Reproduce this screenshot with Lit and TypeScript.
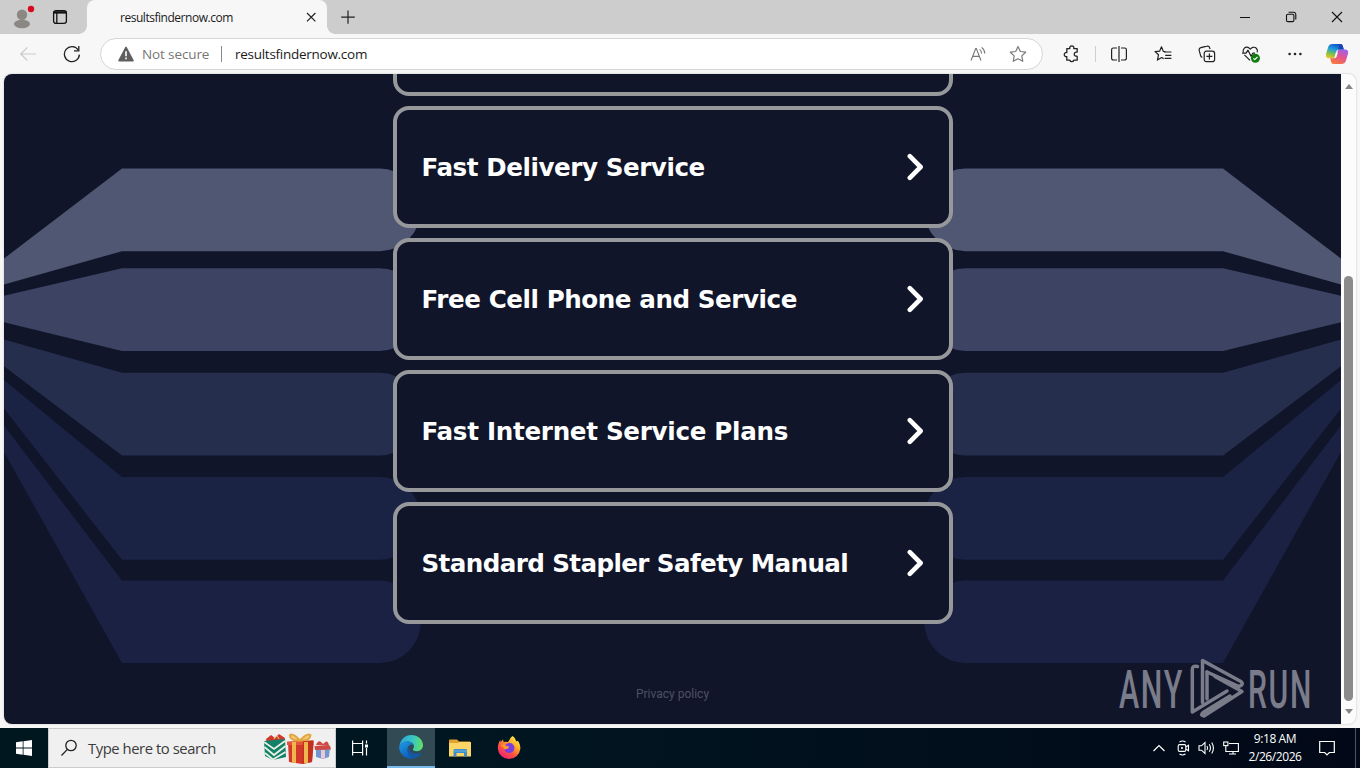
import { LitElement, html, css, svg } from 'lit';
import { customElement, property } from 'lit/decorators.js';
import { styleMap } from 'lit/directives/style-map.js';

const CARDS = [
  { label: 'Fast Delivery Service', tracking: -0.44 },
  { label: 'Free Cell Phone and Service', tracking: -0.43 },
  { label: 'Fast Internet Service Plans', tracking: -0.3 },
  { label: 'Standard Stapler Safety Manual', tracking: -0.6 },
];

// One ribbon per row: y at the page edge (top, bottom) and y of the straight part (top, bottom)
const RIBBONS = [
  { edge: [184.5, 210.5], flat: [94.6, 177.2], fill: '#4f5773' },
  { edge: [221.7, 248.3], flat: [194.2, 276.9], fill: '#3c4363' },
  { edge: [265.4, 292.3], flat: [298.8, 381.4], fill: '#262e4e' },
  { edge: [306, 334.6], flat: [403.1, 485.8], fill: '#1b2345' },
  { edge: [351.5, 378], flat: [506.5, 589.1], fill: '#1a2142' },
];

@customElement('page-ribbons')
export class PageRibbons extends LitElement {
  static styles = css`
    :host {
      display: block;
    }
    svg {
      display: block;
    }
  `;

  ribbon(r: (typeof RIBBONS)[number]) {
    const [e0, e1] = r.edge;
    const [f0, f1] = r.flat;
    const rad = (f1 - f0) / 2;
    return svg`<path fill=${r.fill}
      d="M0 ${e0}L118 ${f0}H375.5A${rad} ${rad} 0 0 1 375.5 ${f1}H118L0 ${e1}Z"/>`;
  }

  render() {
    return html`
      <svg width="1337" height="650" viewBox="0 0 1337 650">
        <g>${RIBBONS.map((r) => this.ribbon(r))}</g>
        <g transform="translate(1337 0) scale(-1 1)">${RIBBONS.map((r) => this.ribbon(r))}</g>
      </svg>
    `;
  }
}

@customElement('link-card')
export class LinkCard extends LitElement {
  @property() label = '';
  @property({ type: Number }) tracking = 0;

  static styles = css`
    :host {
      box-sizing: border-box;
      display: flex;
      align-items: center;
      justify-content: space-between;
      width: 560px;
      height: 122px;
      flex: none;
      padding: 0 24px;
      border: 4px solid #96989b;
      border-radius: 16px;
      background: #10152a;
      color: #fff;
      font: bold 24.6px/30px 'DejaVu Sans', Verdana, sans-serif;
      white-space: nowrap;
    }
    span {
      padding: 2px 0 0 1px;
    }
    svg {
      display: block;
      flex: none;
    }
  `;

  render() {
    return html`
      <span style=${styleMap({ letterSpacing: `${this.tracking}px` })}>${this.label}</span>
      <svg width="20" height="28" viewBox="0 0 20 28" fill="none" stroke="#fff" stroke-width="4.6" stroke-linecap="round" stroke-linejoin="round">
        <path d="M4.8 3.2L15.6 14L4.8 24.8" />
      </svg>
    `;
  }
}

@customElement('title-bar')
export class TitleBar extends LitElement {
  static styles = css`
    :host {
      display: flex;
      height: 34px;
      background: #cdcdcd;
      color: #1b1b1b;
    }
    svg {
      display: block;
    }
    .cell {
      display: flex;
      align-items: center;
      justify-content: center;
      height: 34px;
    }
    .profile { width: 44px; }
    .workspace { width: 32px; }
    .tab {
      display: flex;
      align-items: center;
      box-sizing: border-box;
      width: 240px;
      padding: 0 9px 0 33px;
      justify-content: space-between;
      background: #f7f7f7;
      border-radius: 8px 8px 0 0;
      font-size: 12px;
      letter-spacing: -0.47px;
    }
    .foot {
      width: 8px;
      height: 8px;
      align-self: flex-end;
    }
    .foot.left {
      margin-left: 3px;
      background: radial-gradient(circle at 0 0, #cdcdcd 7.5px, #f7f7f7 8px);
    }
    .foot.right {
      background: radial-gradient(circle at 100% 0, #cdcdcd 7.5px, #f7f7f7 8px);
    }
    .plus { width: 26px; }
    .window {
      display: flex;
      margin-left: auto;
    }
    .window .cell { width: 46px; }
  `;

  render() {
    return html`
      <div class="cell profile">
        <svg width="26" height="26" viewBox="0 0 26 26">
          <circle cx="13" cy="10.7" r="5.2" fill="#8b8783" />
          <ellipse cx="13" cy="20" rx="8" ry="4.2" fill="#8b8783" />
          <circle cx="22" cy="5" r="5" fill="#cdcdcd" />
          <circle cx="22" cy="5" r="3.2" fill="#d60a1e" />
        </svg>
      </div>
      <div class="cell workspace">
        <svg width="16" height="16" viewBox="0 0 16 16" fill="none" stroke="#111" stroke-width="1.3">
          <rect x="1.6" y="1.6" width="12.8" height="12.8" rx="2.4" />
          <path d="M1.6 3.4h12.8" stroke-width="2.4" />
          <path d="M4.8 4v10" />
        </svg>
      </div>
      <div class="foot left"></div>
      <div class="tab">
        <span>resultsfindernow.com</span>
        <svg width="14" height="14" viewBox="0 0 14 14" stroke="#222" stroke-width="1.2"><path d="M3 3l8.4 8.4M11.4 3L3 11.4" /></svg>
      </div>
      <div class="foot right"></div>
      <div class="cell plus">
        <svg width="16" height="16" viewBox="0 0 16 16" stroke="#222" stroke-width="1.2"><path d="M8 1.4v13.4M1.2 8.1h13.6" /></svg>
      </div>
      <div class="window">
        <div class="cell"><svg width="12" height="12" viewBox="0 0 12 12"><path d="M1 6.5h10" stroke="#111" /></svg></div>
        <div class="cell">
          <svg width="12" height="12" viewBox="0 0 12 12" fill="none" stroke="#111" stroke-width="1.1">
            <rect x="1.5" y="3.2" width="7.4" height="7.4" rx="1.4" />
            <path d="M3.6 1.3H8.6a2.2 2.2 0 0 1 2.2 2.2v5" />
          </svg>
        </div>
        <div class="cell"><svg width="12" height="12" viewBox="0 0 12 12" stroke="#111" stroke-width="1.1"><path d="M1 1l10 10M11 1L1 11" /></svg></div>
      </div>
    `;
  }
}

@customElement('address-row')
export class AddressRow extends LitElement {
  static styles = css`
    :host {
      display: flex;
      align-items: center;
      height: 40px;
      background: #f7f7f7;
      padding-left: 6px;
    }
    svg {
      display: block;
      flex: none;
    }
    .cell {
      display: flex;
      align-items: center;
      justify-content: center;
      width: 44px;
      height: 40px;
      flex: none;
    }
    .pill {
      box-sizing: border-box;
      display: flex;
      align-items: center;
      width: 943px;
      height: 32px;
      margin: 0 7px 0 6px;
      padding: 0 15px 0 17px;
      border: 1px solid #d6d6d6;
      border-radius: 16px;
      background: #fff;
      font-size: 14px;
      color: #1b1b1b;
    }
    .state {
      margin-left: 8px;
      color: #767676;
      font-size: 13.5px;
      width: 79px;
      letter-spacing: -0.12px;
    }
    .bar {
      width: 1px;
      height: 16px;
      background: #8a8a8a;
      margin-right: 13px;
    }
    .url {
      font-size: 13.5px;
      letter-spacing: -0.27px;
    }
    .aloud { margin-left: auto; }
    .star { margin-left: 22px; }
    .divider {
      width: 1px;
      height: 16px;
      margin: 0 1px;
      background: #cfcfcf;
    }
    .last { margin-left: -2px; }
  `;

  render() {
    return html`
      <div class="cell">
        <svg width="18" height="18" viewBox="0 0 18 18" fill="none" stroke="#c9c9c9" stroke-width="1.2"><path d="M17 9H1.8M8.4 2.4L1.8 9l6.6 6.6" /></svg>
      </div>
      <div class="cell">
        <svg width="18" height="18" viewBox="0 0 18 18" fill="none" stroke="#222" stroke-width="1.3">
          <path d="M16.4 9.6A7.5 7.5 0 1 1 15.2 5" /><path d="M15.8 1v4.8h-4.8" />
        </svg>
      </div>
      <div class="pill">
        <svg width="16" height="16" viewBox="0 0 16 16">
          <path d="M8 1.4L15 14.6H1Z" fill="#5f5f5f" stroke="#5f5f5f" stroke-width="1.6" stroke-linejoin="round" />
          <path d="M8 5.2v5M8 11.4v1.8" stroke="#fff" stroke-width="1.6" />
        </svg>
        <span class="state">Not secure</span>
        <div class="bar"></div>
        <span class="url">resultsfindernow.com</span>
        <svg class="aloud" width="17" height="16" viewBox="0 0 17 16" fill="none" stroke="#767676" stroke-width="1.1">
          <path d="M1 14.5L5.7 2.5h.6L11 14.5M2.7 10.4h6.6" />
          <path d="M9.6 3.4a4.6 4.6 0 0 1 1.9 4.2M11.6 1.4a7.6 7.6 0 0 1 3.2 6.2" />
        </svg>
        <svg class="star" width="18" height="18" viewBox="0 0 18 18" fill="none" stroke="#7a7a7a" stroke-width="1.2" stroke-linejoin="round">
          <path d="M9 1.6l2.3 4.9 5.4.7-3.9 3.7 1 5.4L9 13.7l-4.8 2.6 1-5.4L1.3 7.2l5.4-.7Z" />
        </svg>
      </div>
      <div class="cell">
        <svg width="18" height="18" viewBox="0 0 18 18" fill="none" stroke="#222" stroke-width="1.3" stroke-linejoin="round">
          <path d="M3.8 3.6h3a2.1 2.1 0 1 1 4 0h3.4v3.2a.4.4 0 0 1-.5.4 2 2 0 1 0 0 3.9.4.4 0 0 1 .5.4v3.7h-3.4a2.1 2.1 0 0 1-4 0h-3v-3.6a2.1 2.1 0 1 1 0-4.1Z" />
        </svg>
      </div>
      <div class="divider"></div>
      <div class="cell">
        <svg width="18" height="18" viewBox="0 0 18 18" fill="none" stroke="#222" stroke-width="1.2">
          <path d="M7 3H3.4a1.8 1.8 0 0 0-1.8 1.8v8.4A1.8 1.8 0 0 0 3.4 15H7M11 3h3.6a1.8 1.8 0 0 1 1.8 1.8v8.4a1.8 1.8 0 0 1-1.8 1.8H11M9 1v16" />
        </svg>
      </div>
      <div class="cell">
        <svg width="18" height="18" viewBox="0 0 18 18" fill="none" stroke="#222" stroke-width="1.2" stroke-linejoin="round">
          <path d="M10 7h7.4M11.2 10.3h6.2M10.6 13.4h6.8" />
          <path d="M11.4 6.6L9.3 6.4 7.5 1.8 5.6 6.2 1 6.6l3.5 3.2-1.1 5.3 4.3-2.5 2 1.2" />
        </svg>
      </div>
      <div class="cell">
        <svg width="18" height="18" viewBox="0 0 18 18" fill="none" stroke="#222" stroke-width="1.2">
          <rect x="6.2" y="6.2" width="10.4" height="10.4" rx="2.2" />
          <path d="M11.4 8.4v6M8.4 11.4h6" />
          <path d="M4.3 12.4A2.4 2.4 0 0 1 2.6 10.6L1.2 5.4a2.3 2.3 0 0 1 1.7-2.8l6-1.4a2.3 2.3 0 0 1 2.8 1.6l.3 1.3" />
        </svg>
      </div>
      <div class="cell">
        <svg width="20" height="18" viewBox="0 0 20 18" fill="none" stroke="#222" stroke-width="1.2" stroke-linejoin="round">
          <path d="M9 15.4L3.4 9.8M2.3 7.6C1.2 4.2 4.2 1.4 7 2.4c1.1.4 1.6 1 2.3 1.8.7-.8 1.3-1.4 2.5-1.8 2.9-.8 5.5 2 4.4 5" />
          <path d="M1 8.2h4l2-3 3 6 1.8-3H14" />
          <circle cx="14.4" cy="13.2" r="4.5" fill="#107c10" stroke="none" />
          <path d="M12.4 13.3l1.4 1.4 2.7-2.8" stroke="#fff" />
        </svg>
      </div>
      <div class="cell">
        <svg width="16" height="4" viewBox="0 0 16 4" fill="#222"><circle cx="2.6" cy="2" r="1.3" /><circle cx="8" cy="2" r="1.3" /><circle cx="13.4" cy="2" r="1.3" /></svg>
      </div>
      <div class="cell last">
        <svg width="24" height="22" viewBox="0 0 24 22">
          <defs>
            <linearGradient id="ca" x1="0.6" y1="0" x2="0.2" y2="1">
              <stop offset="0" stop-color="#1450c8" /><stop offset="0.4" stop-color="#1fa0dc" /><stop offset="0.7" stop-color="#7fc04a" /><stop offset="1" stop-color="#f5c524" />
            </linearGradient>
            <linearGradient id="cb" x1="0.8" y1="0" x2="0.3" y2="1">
              <stop offset="0" stop-color="#9d5ff0" /><stop offset="0.5" stop-color="#e4558e" /><stop offset="1" stop-color="#f9783c" />
            </linearGradient>
          </defs>
          <path d="M7.6 1H15.4C17.4 1 17.6 2.4 18.2 4.6L18.8 6.6H14C12.2 6.6 11.6 7.6 11 9.6L9.4 15.2H4C1 15.2.4 13.2 1.2 10.2L3.2 4C3.9 2 5.2 1 7.6 1Z" fill="url(#ca)" />
          <path d="M16.4 21H8.8C6.6 21 6.4 19.6 5.8 17.4L5.2 15.2H8.6C10.4 15.2 11 14.4 11.600 12.2L13.2 6.600H20C23 6.6 23.6 8.8 22.8 11.6L20.8 18C20.1 20 18.8 21 16.4 21Z" fill="url(#cb)" />
          <path d="M10.800 9.800L12.900 9.800 11.600 13.600Q11 15.200 9.300 15.200Z" fill="#f7f7f7" />
          <path d="M14.2 1h1.2c2 0 2.2 1.4 2.8 3.6l.6 2h-5.6Z" fill="#1b46b8" />
        </svg>
      </div>
    `;
  }
}

@customElement('web-page')
export class WebPage extends LitElement {
  static styles = css`
    :host {
      display: flex;
      height: 650px;
      margin: 0 4px;
      border-radius: 8px;
      overflow: hidden;
      background: #fcfcfc;
      box-shadow: 0 0 2px rgba(0, 0, 0, 0.25);
    }
    .page {
      position: relative;
      width: 1337px;
      height: 650px;
      overflow: hidden;
      background: #10152a;
    }
    page-ribbons {
      position: absolute;
      inset: 0;
    }
    .content {
      position: relative;
      display: flex;
      flex-direction: column;
      align-items: center;
      gap: 10px;
      margin-top: -100px;
    }
    .privacy {
      margin-top: 53px;
      font: 12px/14px Roboto, sans-serif;
      color: #4d5162;
    }
    .watermark {
      position: absolute;
      left: 1111px;
      top: 580px;
    }
    .scroll {
      display: flex;
      flex-direction: column;
      align-items: center;
      width: 15px;
      box-sizing: border-box;
      padding: 10px 0 10px;
    }
    .thumb {
      width: 9px;
      height: 425px;
      margin-top: 187px;
      border-radius: 5px;
      background: #8b8b8b;
    }
    .up, .down {
      width: 0;
      height: 0;
      border: 4.5px solid transparent;
    }
    .up { border-top: 0; border-bottom: 5px solid #858585; }
    .down { border-bottom: 0; border-top: 5px solid #858585; margin-top: auto; }
  `;

  render() {
    return html`
      <div class="page">
        <page-ribbons></page-ribbons>
        <div class="content">
          <link-card></link-card>
          ${CARDS.map((c) => html`<link-card .label=${c.label} .tracking=${c.tracking}></link-card>`)}
          <div class="privacy">Privacy policy</div>
        </div>
        <svg class="watermark" width="216" height="70" viewBox="0 0 216 70">
          <g fill="#7b7c8a" font-family="Roboto, sans-serif" font-size="53.4" font-weight="500" letter-spacing="3">
            <text x="4" y="54" textLength="65" lengthAdjust="spacingAndGlyphs">ANY</text>
            <text x="133" y="54" textLength="65" lengthAdjust="spacingAndGlyphs">RUN</text>
          </g>
          <g fill="none" stroke="#7b7c8a" stroke-width="3.5" stroke-linejoin="round" stroke-linecap="round">
            <path d="M82.5 12.5Q77.3 11.2 77.3 15.5V58L112 37" />
            <path d="M92 18L124 32.5Q130 30 125 27L87.5 6.5V48.500" />
            <path d="M92 18V45" />
            <path d="M100 22.500L127 37.5L89 62Q84.500 61.500 88 58.500L115 42" />
          </g>
        </svg>
      </div>
      <div class="scroll">
        <div class="up"></div>
        <div class="thumb"></div>
        <div class="down"></div>
      </div>
    `;
  }
}

@customElement('task-bar')
export class TaskBar extends LitElement {
  static styles = css`
    :host {
      display: flex;
      height: 40px;
      background: linear-gradient(90deg, #00171f 0%, #001620 35%, #01101c 65%, #020817 100%);
      color: #fff;
    }
    svg {
      display: block;
      flex: none;
    }
    .cell {
      display: flex;
      align-items: center;
      justify-content: center;
      width: 48px;
      height: 40px;
      flex: none;
    }
    .search {
      box-sizing: border-box;
      display: flex;
      align-items: center;
      width: 288px;
      padding: 0 3px 0 12px;
      background: #f0f0f0;
      border: 1px solid #c9cccd;
      color: #3b3b3b;
      font-size: 14.8px;
      letter-spacing: -0.44px;
    }
    .search span { margin-left: 11px; }
    .search .gifts { margin-left: auto; }
    .edge {
      box-sizing: border-box;
      margin: 0 1px 0 3px;
      background: #324a54;
      border-bottom: 2px solid #76b9ed;
    }
    .fx { margin-left: 1px; }
    .tray {
      display: flex;
      align-items: center;
      margin-left: auto;
      height: 40px;
    }
    .tray .cell { width: 24px; }
    .clock {
      width: 64px;
      text-align: center;
      font-size: 12px;
      line-height: 18px;
      letter-spacing: -0.42px;
      white-space: nowrap;
    }
    .tray .note {
      width: 40px;
      box-sizing: border-box;
    }
    .peek {
      width: 4px;
      height: 40px;
      margin-left: 8px;
      border-left: 1px solid #4b5560;
    }
  `;

  render() {
    return html`
      <div class="cell">
        <svg width="16" height="16" viewBox="0 0 16 16" fill="#fff"><path d="M0 2.200L6.700 1.300V7.600H0ZM7.500 1.200L16 0V7.600H7.500ZM0 8.400H6.700V14.700L0 13.800ZM7.500 8.400H16V16L7.500 14.800Z" /></svg>
      </div>
      <div class="search">
        <svg width="16" height="18" viewBox="0 0 16 18" fill="none" stroke="#222" stroke-width="1.3"><circle cx="10" cy="6.500" r="5.200" /><path d="M6.400 10.400L.500 16.500" /></svg>
        <span>Type here to search</span>
        <svg class="gifts" width="68" height="34" viewBox="0 0 68 34">
          <path d="M2 8l5-4 4 3 4-4 6 4-1 6H3Z" fill="#cf3a2c" />
          <path d="M10 8q2.500-6 5 0" stroke="#f0d080" fill="none" />
          <path d="M0 10L21 8L22 26L9 29L1 25Z" fill="#138068" />
          <path d="M0 11L10 18L21 10M.4 16L10 24L21.500 15M1 22L9 28.500L21.500 21" fill="none" stroke="#e9f1e4" stroke-width="1.800" />
          <path d="M24 11L48 10L49 14L48 31L38 33L25 31Z" fill="#d3372a" />
          <path d="M23 10.500L49.500 9.500V14H23Z" fill="#e4533c" />
          <path d="M39 10L49.500 9.500V14L48 31L38 33Z" fill="#c4301f" />
          <path d="M28 11V31.500L32 32V11ZM40 11V32.500L44 31.800V11Z" fill="#eeb64d" />
          <path d="M36 9.500Q29 2 26 4Q26 10 36 9.500Q46 10 46.500 4Q43 2 36 9.500Z" fill="#f3cd75" stroke="#e2a640" stroke-width="2" />
          <path d="M52 14Q55 7 59 13Q64 7 65 15Z" fill="#cf4a45" />
          <path d="M52 18L66 16.500L65 26L59 28L52 26Z" fill="#7597cf" />
          <path d="M50.500 15L66 14.500L67 18.500L51 19Z" fill="#cf4a45" />
          <path d="M57 19V27.500L61 27.500V19Z" fill="#e7c9d8" />
        </svg>
      </div>
      <div class="cell">
        <svg width="18" height="18" viewBox="0 0 18 18" fill="none" stroke="#fff" stroke-width="1.200">
          <path d="M1.600 1.500V4.500H11.600V1.500M1.600 16.500V13.500H11.600V16.500M1.600 4.500V13.500M11.600 4.500V13.500M15.500 1.500V4.500M15.500 9V16.500" />
          <rect x="14" y="5.500" width="3" height="3" fill="#fff" stroke="none" />
        </svg>
      </div>
      <div class="cell edge">
        <svg width="24" height="24" viewBox="0 0 24 24">
          <defs>
            <linearGradient id="ea" x1="0" y1="0.300" x2="1" y2="0.400"><stop offset="0" stop-color="#2aa5e2" /><stop offset="0.550" stop-color="#37c6c4" /><stop offset="1" stop-color="#62df66" /></linearGradient>
            <linearGradient id="eb" x1="0" y1="0" x2="0.600" y2="1"><stop offset="0" stop-color="#1f9be6" /><stop offset="1" stop-color="#0c5cb8" /></linearGradient>
          </defs>
          <path d="M.500 11C1.300 4.600 6.300 0 12.300 0C18.800 0 24 4.700 24 10.300C24 14 21.200 16.200 17.800 16.200C15.500 16.200 13.900 15.400 13.900 14.500C13.900 13.700 15 13.400 15 11.600C15 8.500 12 6.500 8.300 6.500C4.800 6.500 2 8 .500 11Z" fill="url(#ea)" />
          <path d="M.100 12C1 8.600 4.400 6.500 8.300 6.500C11.300 6.500 13.700 7.900 14.600 9.800C11 8.500 8.300 11.500 8.500 15C8.700 18.600 11.600 21.500 15 23.400A12 12 0 0 1 .100 12Z" fill="url(#eb)" />
          <path d="M9.700 12C7.200 16 9.500 21.300 14.500 23.600C17.800 23.200 20.800 21.300 22.500 18.500C22.800 17.900 22.400 17.600 21.900 17.800C16.300 20.200 9.800 17.500 9.700 12Z" fill="#1557a2" />
        </svg>
      </div>
      <div class="cell">
        <svg width="22" height="18" viewBox="0 0 22 18">
          <path d="M0 1.500Q0 .500 1 .500H8L10 2.500H21V8H0Z" fill="#e3a22d" />
          <path d="M0 4H9L10.500 3H22V17.500H0Z" fill="#fbd667" />
          <path d="M4.500 17.500V11.200Q4.500 10 5.700 10H16.800Q18 10 18 11.200V17.500H15V14H7.500V17.500Z" fill="#3c8fca" />
          <path d="M4.500 12H18" stroke="#67b2e3" />
        </svg>
      </div>
      <div class="cell fx">
        <svg width="24" height="24" viewBox="0 0 24 24">
          <defs>
            <linearGradient id="fa" x1="0.850" y1="0.050" x2="0.250" y2="0.950"><stop offset="0" stop-color="#fff04a" /><stop offset="0.350" stop-color="#ffaa27" /><stop offset="0.650" stop-color="#ff563f" /><stop offset="1" stop-color="#ef2270" /></linearGradient>
          </defs>
          <path d="M15.500 0C18 1.600 18.600 3.600 19 5C20.300 5.600 20.600 5 20.500 4.400C22.600 6.700 23.600 9.700 23.300 13A11.300 11.300 0 0 1 .800 12.500C.700 9 1.900 6 3.400 4L3.700 6.200L6 3.300L6.600 6.100Q8.500 5.400 10.500 6C12.300 5.600 12.500 2.200 15.500 0Z" fill="url(#fa)" />
          <path d="M11 7.200C15 6.300 18 9.200 17.300 13C16.600 16.700 12 18.500 8.800 15.800C7.700 14.900 7.200 13.600 7.400 12.600C8.600 13.400 10.800 13.200 11.800 12L8 10.700C8.200 8.700 9.400 7.600 11 7.200Z" fill="#7a3ee0" />
          <path d="M3.600 9.300C5.500 8 7.500 8.500 8.500 9.500C10 10.300 11.500 10 12.200 10.700C12 12 10.600 11.800 9.700 12.700C8.500 14 6.700 13.200 6.600 12Z" fill="#ff9a2e" />
        </svg>
      </div>
      <div class="tray">
        <div class="cell"><svg width="12" height="8" viewBox="0 0 12 8" fill="none" stroke="#fff" stroke-width="1.200"><path d="M.500 7L6 1.500L11.500 7" /></svg></div>
        <div class="cell">
          <svg width="14" height="16" viewBox="0 0 14 16" fill="none" stroke="#fff" stroke-width="1.100">
            <rect x="2.200" y="4.600" width="7.600" height="6.800" rx="1.400" /><circle cx="6" cy="8" r=".500" />
            <path d="M9.900 7L12.500 5.200V10.800L9.900 9M3.500 1.900Q6.500 .200 9.500 1.900M3.500 14.100Q6.500 15.800 9.500 14.100" />
          </svg>
        </div>
        <div class="cell">
          <svg width="18" height="14" viewBox="0 0 18 14" fill="none" stroke="#fff" stroke-width="1.100">
            <path d="M1 4.800H3.500L7 1.500V12.500L3.500 9.200H1Z" /><path d="M9 5Q10.200 7 9 9M11.300 3.200Q13.600 7 11.300 10.800M13.700 1.500Q17.200 7 13.700 12.500" />
          </svg>
        </div>
        <div class="cell">
          <svg width="16" height="14" viewBox="0 0 16 14" fill="none" stroke="#fff" stroke-width="1.100">
            <path d="M6 2.500H15.400V10.500H4M10 10.500V13M6 13H13" /><rect x=".700" y="1" width="4.200" height="3.600" /><path d="M2.800 4.600V10.500H4.500" />
          </svg>
        </div>
        <div class="clock"><div>9:18 AM</div><div>2/26/2026</div></div>
        <div class="cell note">
          <svg width="16" height="16" viewBox="0 0 16 16" fill="none" stroke="#fff" stroke-width="1.200"><path d="M.700 1.500H15.300V12.500H10.300L8 14.800L5.700 12.500H.700Z" /></svg>
        </div>
        <div class="peek"></div>
      </div>
    `;
  }
}

@customElement('app-root')
export class AppRoot extends LitElement {
  static styles = css`
    :host {
      display: flex;
      flex-direction: column;
      justify-content: space-between;
      width: 1360px;
      height: 768px;
      overflow: hidden;
      background: #f7f7f7;
      font-family: 'Open Sans', 'Noto Sans', sans-serif;
    }
  `;

  render() {
    return html`
      <div>
        <title-bar></title-bar>
        <address-row></address-row>
        <web-page></web-page>
      </div>
      <task-bar></task-bar>
    `;
  }
}
